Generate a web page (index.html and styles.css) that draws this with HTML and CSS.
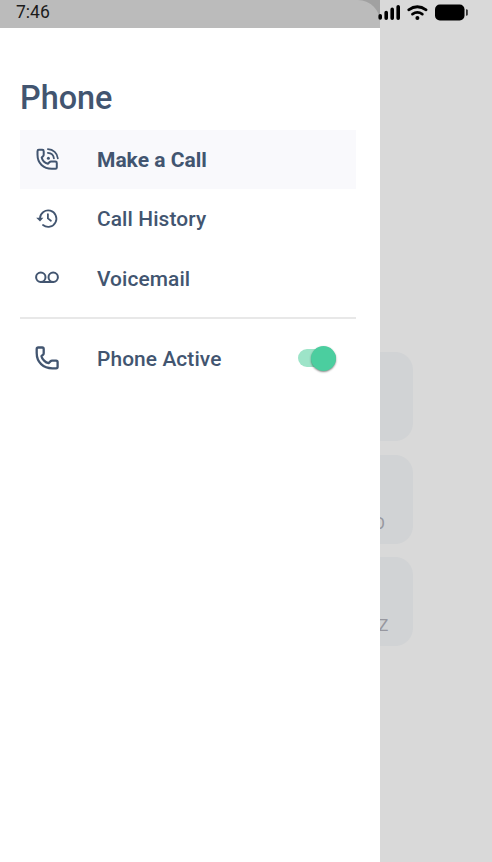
FILE: index.html
```html
<!DOCTYPE html>
<html lang="en">
<head>
<meta charset="utf-8">
<title>Phone</title>
<link rel="stylesheet" href="styles.css">
</head>
<body>
<div class="screen">
  <div class="keypad">
    <div class="key"></div>
    <div class="key"><span>MNO</span></div>
    <div class="key"><span>WXYZ</span></div>
  </div>
  <aside class="drawer">
    <div class="status"><div class="status-fill"><time>7:46</time></div></div>
    <div class="content">
      <h1>Phone</h1>
      <nav>
        <a class="row active">
          <svg class="icon" viewBox="0 0 24 24"><path d="M3.9 2.8h3.4q1.4 0 1.4 1.4v3.6q0 .9-.7 1.5L6.7 10.5c.6 2.6 3.2 5.4 6.2 6.2l1.5-1.5q.7-.7 1.6-.7h4.4q1.4 0 1.4 1.4v4.5q0 1.4-1.4 1.4h-3.6C8.5 21.8 2.5 16.3 2.5 7.8V4.2q0-1.4 1.4-1.4z"/><path class="thin" d="M12.9 2.1c5.2.2 9.6 4 9.9 9.2M12.9 5.9c3.2.2 5.7 2.4 6 5.4"/><circle class="dot" cx="13.4" cy="11.2" r="1.5"/></svg>
          <span>Make a Call</span>
        </a>
        <a class="row">
          <svg class="icon" viewBox="0 0 24 24"><path class="thin" d="M5 12.3A8.2 8.2 0 1 1 8 19M12.9 8.2v4.2l3 2.4"/><path class="solid" d="M1.2 11.8h7.2L5 15.4z"/></svg>
          <span>Call History</span>
        </a>
        <a class="row">
          <svg class="icon" viewBox="0 0 24 24"><circle cx="5.8" cy="11.2" r="4.7"/><circle cx="18.2" cy="11.2" r="4.7"/><path d="M5.8 15.9h12.4"/></svg>
          <span>Voicemail</span>
        </a>
      </nav>
      <hr>
      <div class="row toggle-row">
        <svg class="icon" viewBox="0 0 24 24"><path class="handset" d="M3.2 1.5h4q1.5 0 1.5 1.5v4.2q0 1-.8 1.7L6.5 10.2c.6 3 3.9 6.3 7.1 7l1.8-1.8q.7-.7 1.7-.7h4q1.5 0 1.5 1.5v4.6q0 1.5-1.5 1.5h-3.8C8.3 22.3 1.7 16.3 1.7 7V3q0-1.5 1.5-1.5z"/></svg>
        <span>Phone Active</span>
        <div class="switch"><div class="thumb"></div></div>
      </div>
    </div>
  </aside>
  <svg class="indicators" viewBox="0 0 92 18">
    <path class="bars" d="M2.2 13.8v2.2M8.2 10.5v5.7M14.2 7.4v8.8M20.2 4.8v11.4"/>
    <path class="wifi" d="M30.7 7.8q8.6-6.2 17.4 0M34.5 12.1q4.9-3.4 9.8 0"/>
    <circle cx="39.4" cy="16.1" r="2"/>
    <rect x="57" y="2.5" width="29.5" height="16" rx="4.8"/>
    <path class="tip" d="M88 7.3q1.8 0 1.8 1v4.4q0 1-1.8 1z"/>
  </svg>
</div>
</body>
</html>
```
FILE: styles.css
```css
* { box-sizing: border-box; }
body { margin: 0; font-family: Roboto, sans-serif; color: #425570; }
.screen {
  position: relative;
  width: 492px;
  height: 862px;
  overflow: hidden;
  background: #d9d9d9;
}
.keypad {
  display: flex;
  flex-direction: column;
  gap: 13.4px;
  width: 98px;
  margin-left: 315px;
  padding-top: 352.2px;
}
.key {
  display: flex;
  align-items: flex-end;
  justify-content: center;
  height: 89px;
  padding-bottom: 10.6px;
  border-radius: 18px;
  background: #d1d3d5;
  color: #97979f;
  font-size: 17px;
  line-height: 20px;
}
.key span { margin-left: 3px; }
.drawer {
  position: absolute;
  top: 0;
  left: 0;
  width: 380.4px;
  height: 862px;
  background: #fff;
}
.status { height: 27.6px; background: #a1a1a1; }
.status-fill {
  height: 100%;
  padding: 2px 0 0 16px;
  border-top-right-radius: 22px;
  background: #bbb;
  color: #1b1b1b;
  font-size: 17.5px;
  line-height: 21px;
}
.content { padding: 50px 24px 0 20px; }
h1 {
  margin: 0;
  height: 52px;
  font-size: 32.4px;
  font-weight: 500;
  line-height: 41px;
}
.row {
  display: flex;
  align-items: center;
  height: 59.2px;
  padding-left: 15px;
  font-size: 20.9px;
  font-weight: 500;
  letter-spacing: .1px;
}
.row span { margin-left: 38px; padding-top: 2px; }
.active { background: #f9f9fc; font-weight: 700; font-size: 21px; letter-spacing: 0; }
.icon {
  width: 24px;
  height: 24px;
  flex: none;
  fill: none;
  stroke: #425570;
  stroke-width: 2;
  stroke-linecap: round;
  stroke-linejoin: round;
}
.icon .dot, .icon .solid { fill: #425570; stroke: none; }
.icon .thin { stroke-width: 1.8; }
.icon .handset { stroke-width: 2.3; }
hr { height: 2px; margin: 9.6px 0 9.8px; border: 0; background: #e8e8e8; }
.switch {
  width: 38px;
  height: 18px;
  margin-left: auto;
  margin-right: 20px;
  border-radius: 9px;
  background: #9de4c8;
  display: flex;
  align-items: center;
  justify-content: flex-end;
}
.thumb {
  width: 25px;
  height: 25px;
  flex: none;
  border-radius: 50%;
  background: #4bce9f;
  box-shadow: 0 1px 2px #0007;
}
.indicators {
  position: absolute;
  left: 378px;
  top: 2px;
  width: 92px;
  height: 18px;
  overflow: visible;
}
.bars { stroke: #000; stroke-width: 3.6; stroke-linecap: round; }
.wifi { fill: none; stroke: #000; stroke-width: 2.8; stroke-linecap: round; }
.tip { fill: #333; }
```
